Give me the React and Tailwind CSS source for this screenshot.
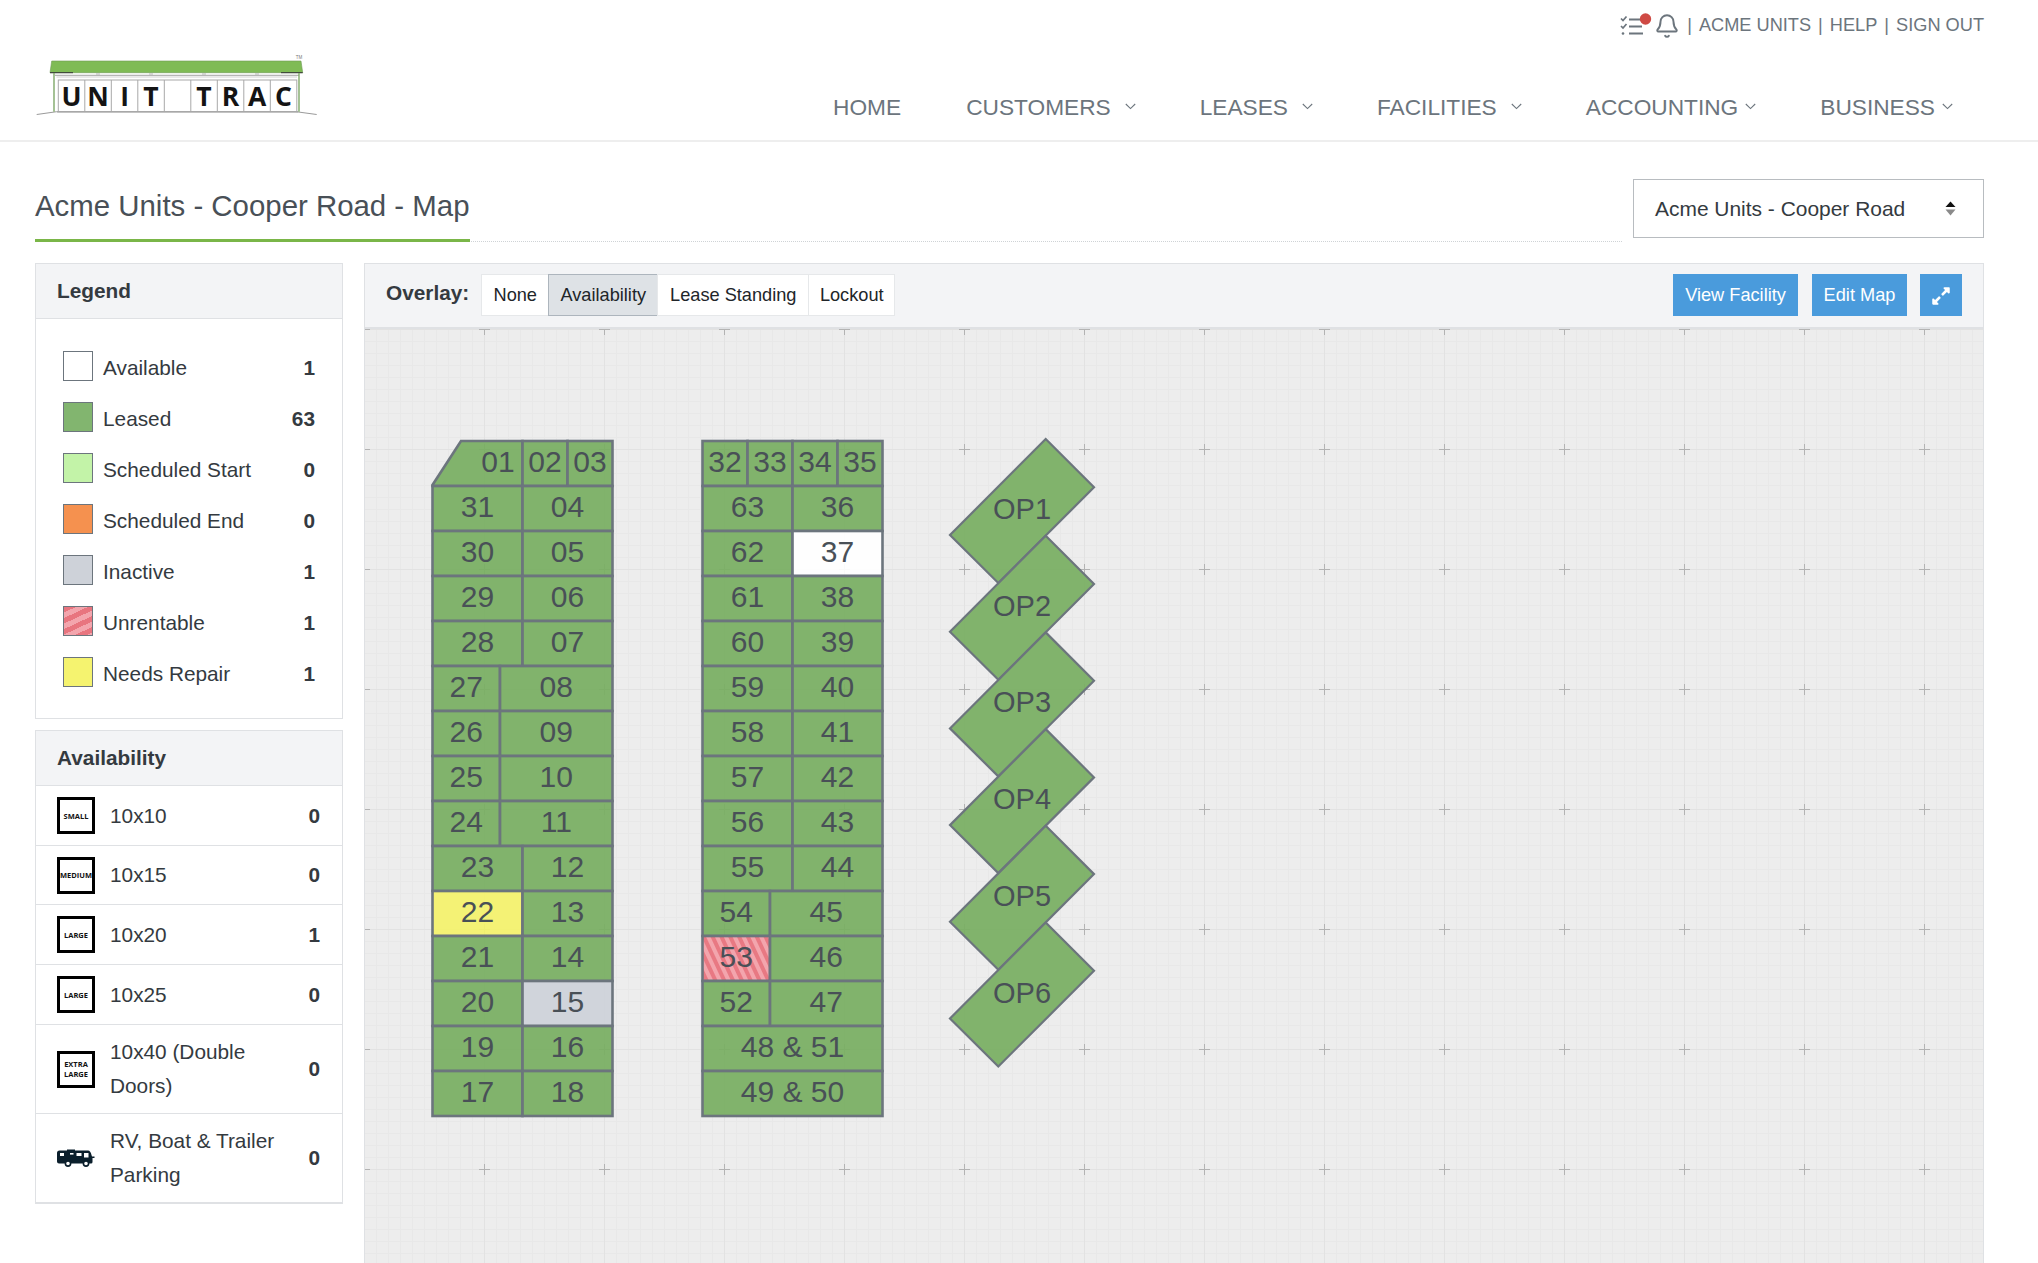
import React from "react";
import { FaExpandAlt } from "react-icons/fa";
import { Bell } from "lucide-react";

const GREEN = "#79ae62";
const STROKE = "#6c757d";
const TEXT = "#495057";

function Logo() {
  const xs = [58.3, 84.8, 111.3, 137.8, 164.3, 190.8, 217.3, 243.8, 270.3, 296.8];
  const letters = ["U", "N", "I", "T", "", "T", "R", "A", "C"];
  return (
    <svg width="300" height="70" viewBox="30 50 300 70" className="block">
      <path d="M36.7 114.5 L56.7 111.7 L296 111.7 L316.7 114.5" fill="none" stroke="#9a9a9a" strokeWidth="1" />
      <path d="M51.7 61 H301 L302.7 72.7 H50 Z" fill="#7fbb55" stroke="#6f9a55" strokeWidth="0.6" />
      <path d="M50 72.7 H73 M281 72.7 H302.7" stroke="#333" strokeWidth="1" />
      <path d="M55 75.3 H299" stroke="#b5b5b5" strokeWidth="1.2" />
      <path d="M97 73 v2 M99 73 v2 M150 73 v2 M152 73 v2 M203 73 v2 M205 73 v2 M256 73 v2 M258 73 v2" stroke="#aaa" strokeWidth="0.8" />
      <path d="M54 73 V111.7 M299 73 V111.7" stroke="#7fa868" strokeWidth="1.4" />
      <path d="M56.5 77 H297" stroke="#c9c9c9" strokeWidth="0.8" />
      <rect x="58.3" y="80" width="238.5" height="31.7" fill="#fff" stroke="#a8a8a8" strokeWidth="1" />
      {xs.slice(1, -1).map((x) => (
        <path key={x} d={`M${x} 80 V111.7`} stroke="#a8a8a8" strokeWidth="1" />
      ))}
      <path d="M57 111.7 H298" stroke="#a8a8a8" strokeWidth="1.5" />
      {letters.map((l, i) => (
        <text key={i} x={xs[i] + 13.25} y="105.7" textAnchor="middle" fontFamily="'Open Sans', sans-serif" fontWeight="700" fontSize="26.5" fill="#141414">
          {l}
        </text>
      ))}
      <text x="299" y="59" textAnchor="middle" fontFamily="'Liberation Sans', sans-serif" fontSize="4.5" fill="#777">TM</text>
    </svg>
  );
}

function Chevron({ className }) {
  return (
    <svg width="11" height="7" viewBox="0 0 11 7" className={className}>
      <path d="M0.8 1 L5.5 5.6 L10.2 1" fill="none" stroke="#6c757d" strokeWidth="1.1" />
    </svg>
  );
}

function TaskIcon() {
  return (
    <svg width="34" height="26" viewBox="0 0 34 26" className="block">
      <path d="M1 5.5 L3 7.5 L6.5 3.5 M1 13 L3 15 L6.5 11" fill="none" stroke="#6c757d" strokeWidth="1.7" />
      <circle cx="3" cy="20.5" r="1.3" fill="#6c757d" />
      <path d="M9 6.5 H22 M9 13.5 H22 M9 20.5 H23" stroke="#6c757d" strokeWidth="2" />
      <circle cx="25.5" cy="6" r="5.7" fill="#cf4a44" />
    </svg>
  );
}

function Header() {
  const nav = [
    ["HOME", "", "mr-[1px]"],
    ["CUSTOMERS", "ml-[14px]", ""],
    ["LEASES", "ml-[14px]", ""],
    ["FACILITIES", "ml-[14px]", ""],
    ["ACCOUNTING", "ml-[7px]", ""],
    ["BUSINESS", "ml-[7px]", ""],
  ];
  return (
    <header className="h-[142px] border-b-2 border-[#eeeeee] flex justify-between">
      <div className="pl-[30px] pt-[50px]">
        <Logo />
      </div>
      <div className="flex flex-col items-end pr-[54px]">
        <div className="h-[52px] flex items-center text-[18.2px] text-[#6c757d]">
          <TaskIcon />
          <Bell size={26} strokeWidth={1.8} className="text-[#6c757d]" />
          <span className="ml-[7px] mr-[7px]">|</span>
          <span>ACME UNITS</span>
          <span className="mx-[7px]">|</span>
          <span>HELP</span>
          <span className="mx-[7px]">|</span>
          <span>SIGN OUT</span>
        </div>
        <nav className="mt-[32px] h-[46px] mr-[31px] flex items-center gap-[64px] text-[22.7px] text-[#6c757d]">
          {nav.map(([t, c, o]) => (
            <div key={t} className={`flex items-center ${o}`}>
              <span>{t}</span>
              {c && <Chevron className={c} />}
            </div>
          ))}
        </nav>
      </div>
    </header>
  );
}

const legend = [
  ["Available", "1", "bg-white"],
  ["Leased", "63", "bg-[#82b56f]"],
  ["Scheduled Start", "0", "bg-[#c3f3a8]"],
  ["Scheduled End", "0", "bg-[#f5914f]"],
  ["Inactive", "1", "bg-[#ced2d9]"],
  ["Unrentable", "1", "bg-[repeating-linear-gradient(155deg,#e8757f_0px,#e8757f_5px,#f3a5ad_5px,#f3a5ad_10px)]"],
  ["Needs Repair", "1", "bg-[#f5f36f]"],
];

function Size({ lines }) {
  return (
    <div className="w-[38px] h-[37px] shrink-0 border-[3px] border-black bg-white flex flex-col items-center justify-center font-['Open_Sans',sans-serif] font-bold text-[7.5px] leading-[10px] text-[#111]">
      {lines.map((l) => (
        <span key={l}>{l}</span>
      ))}
    </div>
  );
}

function RV() {
  return (
    <svg width="38" height="18" viewBox="0 0 38 18" className="block shrink-0">
      <path d="M0 4 Q0 1.5 2.5 1.5 H10 V0.5 H18 V1.5 H31 Q33.5 1.5 34.5 6 L35 7.5 H37.5 V9 H35.5 V13 Q35.5 14.5 34 14.5 H2 Q0 14.5 0 12.5 Z" fill="#0b1f2c" />
      <rect x="3" y="4" width="4" height="3" fill="#fff" />
      <rect x="19.5" y="4" width="5" height="3" fill="#fff" />
      <rect x="13" y="4" width="3.5" height="1.6" fill="#fff" />
      <rect x="27" y="4" width="4.5" height="4.5" fill="#fff" />
      <circle cx="11" cy="14.5" r="2.6" fill="#fff" stroke="#0b1f2c" strokeWidth="1.6" />
      <circle cx="29" cy="14.5" r="2.6" fill="#fff" stroke="#0b1f2c" strokeWidth="1.6" />
    </svg>
  );
}

const avail = [
  [<Size lines={["SMALL"]} />, "10x10", "0", "h-[60px]"],
  [<Size lines={["MEDIUM"]} />, "10x15", "0", "h-[59px]"],
  [<Size lines={["LARGE"]} />, "10x20", "1", "h-[60px]"],
  [<Size lines={["LARGE"]} />, "10x25", "0", "h-[60px]"],
  [<Size lines={["EXTRA", "LARGE"]} />, "10x40 (Double Doors)", "0", "h-[89px]"],
  [<RV />, "RV, Boat & Trailer Parking", "0", "h-[88px] pb-[1px]"],
];

function Sidebar() {
  return (
    <aside className="w-[308px] shrink-0 flex flex-col gap-[11px] text-[20.8px] text-[#343a40]">
      <section className="h-[456px] border border-[#dfe1e4]">
        <h2 className="h-[55px] flex items-center pl-[21px] bg-[#f3f4f6] border-b border-[#dfe1e4] font-bold">Legend</h2>
        <div className="pt-[21px] pl-[27px] pr-[27px]">
          {legend.map(([label, n, bg]) => (
            <div key={label} className="h-[51px] flex items-center">
              <span className={`w-[30px] h-[30px] border border-[#6c757d] ${bg}`} />
              <span className="ml-[10px] flex-1 pt-[5px]">{label}</span>
              <span className="font-bold pt-[5px]">{n}</span>
            </div>
          ))}
        </div>
      </section>
      <section className="border border-[#dfe1e4] border-b-2">
        <h2 className="h-[55px] flex items-center pl-[21px] bg-[#f3f4f6] border-b border-[#dfe1e4] font-bold">Availability</h2>
        {avail.map(([icon, label, n, h], i) => (
          <div key={label} className={`${h} flex items-center pl-[21px] pr-[22px] ${i < 5 ? "border-b border-[#dfe1e4]" : ""}`}>
            {icon}
            <span className="ml-[15px] w-[170px] leading-[34px]">{label}</span>
            <span className="ml-auto font-bold">{n}</span>
          </div>
        ))}
      </section>
    </aside>
  );
}

const Btn = ({ w, active, children, last }) => (
  <button className={`${w} h-[42px] pt-[2px] text-[18.2px] text-[#212529] border ${active ? "bg-[#dee2e6] border-[#adb5bd]" : "bg-white border-[#e6e8ea]"} ${last ? "" : "-mr-px"}`}>
    {children}
  </button>
);

const Blue = ({ w, children }) => (
  <button className={`${w} h-[42px] pt-[1px] bg-[#4a9bdc] text-white text-[18.2px] flex items-center justify-center`}>{children}</button>
);

function Cell({ x0, x1, r, label, fill = GREEN }) {
  const y = 441 + r * 45;
  return (
    <g>
      <rect x={x0} y={y} width={x1 - x0} height={45} fill={fill} stroke={STROKE} strokeWidth="2.6" />
      <text x={(x0 + x1) / 2} y={y + 31} textAnchor="middle" fontSize="30" fill={TEXT} fillOpacity="1">{label}</text>
    </g>
  );
}

function MapCanvas() {
  const L0 = 432.5, LM = 522.5, LS = 500, L1 = 612.5;
  const R0 = 702.5, RM = 792.5, RS = 770, R1 = 882.5;
  const left = [["31", "04"], ["30", "05"], ["29", "06"], ["28", "07"], ["27", "08"], ["26", "09"], ["25", "10"], ["24", "11"], ["23", "12"], ["22", "13"], ["21", "14"], ["20", "15"], ["19", "16"], ["17", "18"]];
  const right = [["63", "36"], ["62", "37"], ["61", "38"], ["60", "39"], ["59", "40"], ["58", "41"], ["57", "42"], ["56", "43"], ["55", "44"], ["54", "45"], ["53", "46"], ["52", "47"]];
  const fills = { "22": "#f4f26c", "15": "#ced2d9", "37": "#ffffff", "53": "url(#stripes)" };
  return (
    <svg width="1618" height="935" viewBox="365 329 1618 935" className="block" fontFamily="'Liberation Sans', Arial, sans-serif">
      <defs>
        <pattern id="minor" x="364" y="329" width="12" height="12" patternUnits="userSpaceOnUse">
          <rect width="12" height="12" fill="#ededed" />
          <path d="M0 0.5 H12 M0.5 0 V12" stroke="#e8e8e8" strokeWidth="1" />
        </pattern>
        <pattern id="major" x="364" y="329" width="120" height="120" patternUnits="userSpaceOnUse">
          <path d="M0.5 0 V120 M0 0.5 H120" stroke="#e2e2e2" strokeWidth="1" fill="none" />
        </pattern>
        <pattern id="cross" x="358" y="323" width="120" height="120" patternUnits="userSpaceOnUse">
          <path d="M6.5 1 V12 M1 6.5 H12" stroke="#b3b3b3" strokeWidth="1" fill="none" />
        </pattern>
        <pattern id="stripes" width="8" height="8" patternUnits="userSpaceOnUse" patternTransform="rotate(-25)">
          <rect width="8" height="8" fill="#f3a0a8" />
          <rect width="4" height="8" fill="#e8707b" />
        </pattern>
      </defs>
      <rect x="365" y="329" width="1618" height="935" fill="url(#minor)" />
      <rect x="365" y="329" width="1618" height="935" fill="url(#major)" />
      <rect x="365" y="329" width="1618" height="935" fill="url(#cross)" />
      <g fillOpacity="0.93">
        <path d="M461 441 H522.5 V486 H432.5 V485 Z" fill={GREEN} stroke={STROKE} strokeWidth="2.6" />
        <text x="498" y="472" textAnchor="middle" fontSize="30" fill={TEXT} fillOpacity="1">01</text>
        <Cell x0={LM} x1={567.5} r={0} label="02" />
        <Cell x0={567.5} x1={L1} r={0} label="03" />
        {left.map(([a, b], i) => {
          const m = i >= 4 && i <= 7 ? LS : LM;
          return (
            <g key={a}>
              <Cell x0={L0} x1={m} r={i + 1} label={a} fill={fills[a] || GREEN} />
              <Cell x0={m} x1={L1} r={i + 1} label={b} fill={fills[b] || GREEN} />
            </g>
          );
        })}
        {[["32", R0], ["33", 747.5], ["34", RM], ["35", 837.5]].map(([t, x]) => (
          <Cell key={t} x0={x} x1={x + 45} r={0} label={t} />
        ))}
        {right.map(([a, b], i) => {
          const m = i >= 9 ? RS : RM;
          return (
            <g key={a}>
              <Cell x0={R0} x1={m} r={i + 1} label={a} fill={fills[a] || GREEN} />
              <Cell x0={m} x1={R1} r={i + 1} label={b} fill={fills[b] || GREEN} />
            </g>
          );
        })}
        <Cell x0={R0} x1={R1} r={13} label="48 & 51" />
        <Cell x0={R0} x1={R1} r={14} label="49 & 50" />
        {[0, 1, 2, 3, 4, 5].map((k) => {
          const d = k * 96.7;
          return (
            <g key={k}>
              <path d={`M1045.7 ${439 + d} L1094 ${487.3 + d} L998.3 ${583 + d} L950 ${535 + d} Z`} fill={GREEN} stroke={STROKE} strokeWidth="2.2" />
              <text x="1022" y={519 + d} textAnchor="middle" fontSize="29" fill={TEXT} fillOpacity="1">{`OP${k + 1}`}</text>
            </g>
          );
        })}
      </g>
    </svg>
  );
}

function MapPanel() {
  return (
    <section className="flex-1 min-w-0 border-x border-t border-[#dfe1e4]">
      <div className="h-[65px] pb-[1px] bg-[#f3f4f6] border-b-2 border-[#dfe1e4] flex items-center pl-[21px] pr-[21px]">
        <span className="text-[20.8px] font-bold text-[#343a40] -mt-[5px]">Overlay:</span>
        <div className="ml-[12px] flex">
          <Btn w="w-[68px]">None</Btn>
          <Btn w="w-[110px]" active>Availability</Btn>
          <Btn w="w-[152px]">Lease Standing</Btn>
          <Btn w="w-[87px]" last>Lockout</Btn>
        </div>
        <div className="ml-auto flex">
          <Blue w="w-[125px] mr-[14px]">View Facility</Blue>
          <Blue w="w-[95px] mr-[13px]">Edit Map</Blue>
          <Blue w="w-[42px]"><FaExpandAlt size={20} /></Blue>
        </div>
      </div>
      <MapCanvas />
    </section>
  );
}

export default function App() {
  return (
    <div className="h-[1263px] overflow-hidden bg-white font-['Liberation_Sans',Arial,sans-serif]">
      <Header />
      <main className="pl-[35px] pr-[54px]">
        <div className="pt-[37px] flex">
          <div className="flex-1 h-[63px] border-b border-dotted border-[#cfd3d6] flex items-start mr-[11px]">
            <h1 className="h-[63px] pt-[9px] border-b-[3px] border-[#7ab648] text-[29.4px] leading-[36px] text-[#495057]">Acme Units - Cooper Road - Map</h1>
          </div>
          <div className="w-[351px] h-[59px] border border-[#b8bcc0] flex items-center pl-[21px] pr-[27px] text-[20.95px] text-[#343a40]">
            <span className="flex-1">Acme Units - Cooper Road</span>
            <svg width="11" height="15" viewBox="0 0 11 15" className="block">
              <path d="M5.5 0.5 L10.5 6 H0.5 Z" fill="#111" />
              <path d="M0.5 8.5 H10.5 L5.5 14.5 Z" fill="#8a8a8a" />
            </svg>
          </div>
        </div>
        <div className="mt-[21px] flex gap-[21px]">
          <Sidebar />
          <MapPanel />
        </div>
      </main>
    </div>
  );
}
